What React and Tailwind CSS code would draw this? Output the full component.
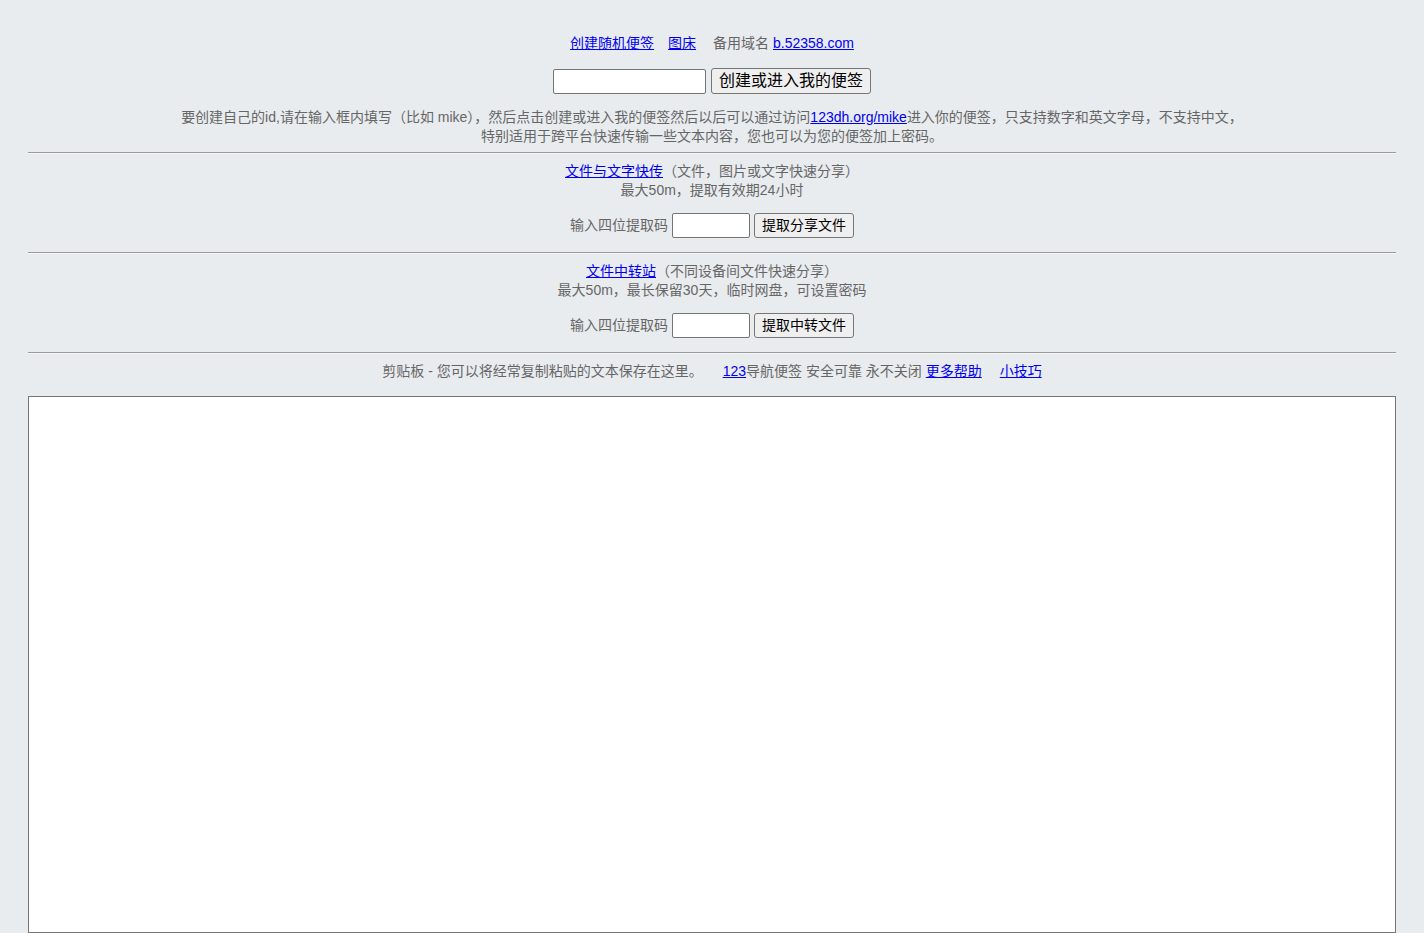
import React from 'react';

const font = "font-['Liberation_Sans','Noto_Sans_CJK_SC',sans-serif]";

const Link = ({ children, className = '' }) => (
  <a href="#" className={`text-[#0000ee] underline ${className}`}>{children}</a>
);

const Button = ({ children, className = '' }) => (
  <button className={`bg-[#efefef] border border-[#767676] rounded-[3px] text-black px-[7px] ${className}`}>
    {children}
  </button>
);

const Divider = () => <div className="border-t border-t-[#9a9a9a] border-b border-b-[#f6f7f9]" />;

// one "share" block: title line, limits line, code input + button
const ShareSection = ({ title, note, limits, button }) => (
  <div className="pt-[8px] pb-[14px] text-center">
    <div className="leading-[19px]">
      <Link>{title}</Link>{note}
    </div>
    <div className="leading-[19px]">{limits}</div>
    <div className="mt-[13px] flex justify-center items-center gap-[4px]">
      <span>输入四位提取码</span>
      <input className="w-[78px] h-[25px] bg-white border border-[#767676] rounded-[2px]" />
      <Button className="h-[25px] text-[14px]">{button}</Button>
    </div>
  </div>
);

const App = () => {
  return (
    <div className={`min-h-screen bg-[#e9ecef] px-[28px] pt-[33px] text-[14px] text-[#666] ${font}`}>
      <div className="text-center leading-[20px]">
        <Link>创建随机便签</Link>
        <span className="inline-block w-[14px]" />
        <Link>图床</Link>
        <span className="inline-block w-[17px]" />
        备用域名 <Link>b.52358.com</Link>
      </div>

      <div className="mt-[15px] flex justify-center items-center gap-[5px]">
        <input className="w-[153px] h-[25px] bg-white border border-[#767676] rounded-[2px]" />
        <Button className="h-[26px] text-[16px] leading-[20px]">创建或进入我的便签</Button>
      </div>

      <p className="mt-[14px] mb-[6px] text-center leading-[19px]">
        要创建自己的id,请在输入框内填写（比如 mike），然后点击创建或进入我的便签然后以后可以通过访问<Link>123dh.org/mike</Link>进入你的便签，只支持数字和英文字母，不支持中文，
        <br />
        特别适用于跨平台快速传输一些文本内容，您也可以为您的便签加上密码。
      </p>

      <Divider />
      <ShareSection
        title="文件与文字快传"
        note="（文件，图片或文字快速分享）"
        limits="最大50m，提取有效期24小时"
        button="提取分享文件"
      />
      <Divider />
      <ShareSection
        title="文件中转站"
        note="（不同设备间文件快速分享）"
        limits="最大50m，最长保留30天，临时网盘，可设置密码"
        button="提取中转文件"
      />
      <Divider />

      <div className="pt-[8px] text-center leading-[19px]">
        剪贴板 - 您可以将经常复制粘贴的文本保存在这里。
        <span className="inline-block w-[20px]" />
        <Link>123</Link>导航便签 安全可靠 永不关闭 <Link>更多帮助</Link>
        <span className="inline-block w-[18px]" />
        <Link>小技巧</Link>
      </div>

      <textarea className="mt-[15px] block w-full h-[537px] bg-white border border-[#767676] resize-none outline-none" />
    </div>
  );
};

export default App;
